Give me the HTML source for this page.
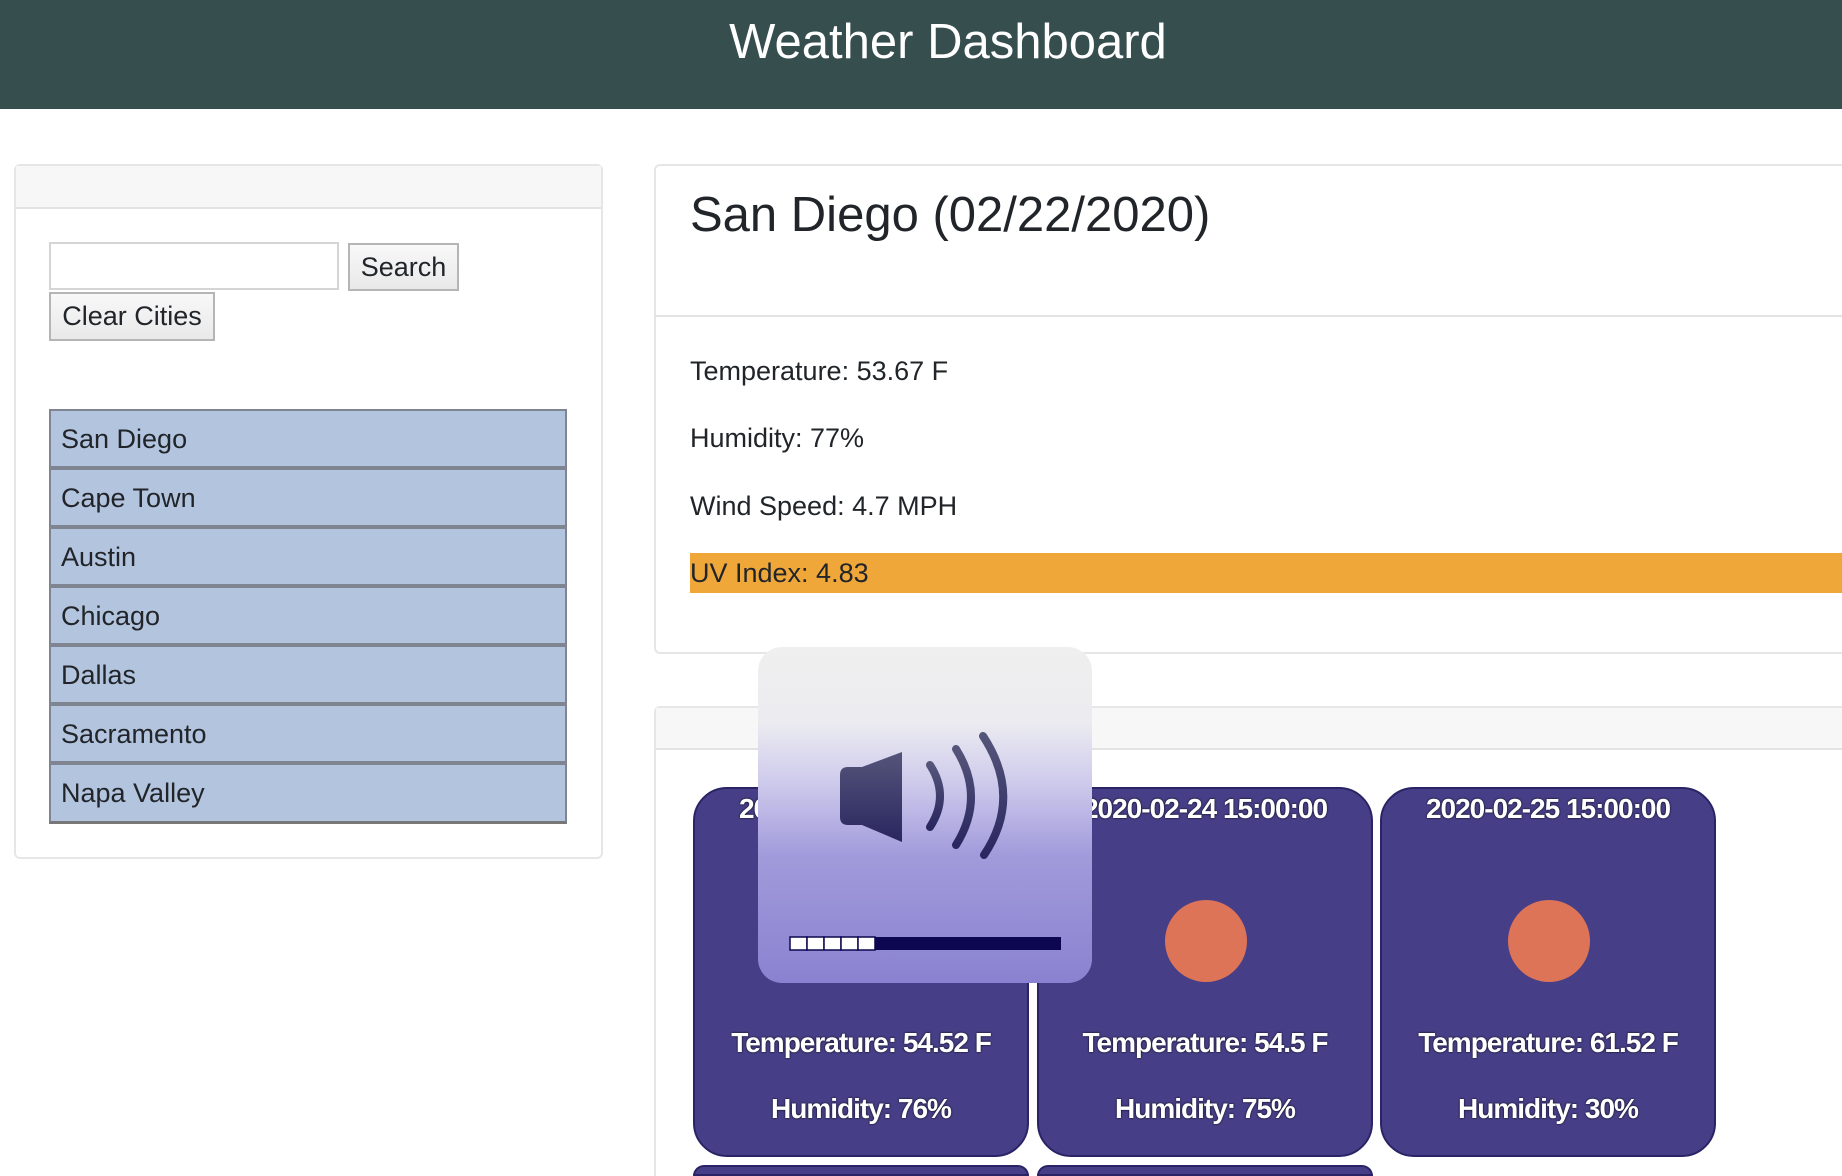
<!DOCTYPE html>
<html><head><meta charset="utf-8"><style>
*{box-sizing:border-box;margin:0;padding:0}
html,body{width:1842px;height:1176px;overflow:hidden}
body{background:#fff;font-family:"Liberation Sans",sans-serif;color:#212529;position:relative}
.a{position:absolute}
.hdr{left:0;top:0;width:1842px;height:109px;background:#364e4e;color:#fff;font-size:49px;text-align:center;line-height:84px;padding-left:54px}
.panel{border:2px solid #e6e6e6;border-radius:6px;background:#fff}
.ph{background:#f7f7f7;border-bottom:2px solid #e3e3e3}
.btn{background:linear-gradient(#f8f8f8,#e9e9e9);border:2px solid #b5b5b5;font-size:27px;text-align:center}
.li{left:49px;width:518px;height:59px;background:#b3c4df;border:2px solid #7f8590;font-size:27px;line-height:56px;padding-left:10px}
.t{font-size:27px;left:690px}
.card{width:336px;height:370px;background:#463f87;border-radius:34px;border:2px solid #2a2466;color:#fff;text-align:center;font-size:28px;text-shadow:0 0 2px #000;letter-spacing:-1px;font-weight:bold}
.card .d{position:absolute;top:4px;width:100%}
.card .c{position:absolute;left:126px;top:111px;width:82px;height:82px;border-radius:50%;background:#de7457}
.card .tp{position:absolute;top:238px;width:100%}
.card .hm{position:absolute;top:304px;width:100%}
</style></head><body>
<div class="a hdr">Weather Dashboard</div>

<div class="a panel" style="left:14px;top:164px;width:589px;height:695px"><div class="ph" style="height:43px"></div></div>
<div class="a" style="left:49px;top:242px;width:290px;height:48px;border:2px solid #d5d5d5"></div>
<div class="a btn" style="left:348px;top:243px;width:111px;height:48px;line-height:44px">Search</div>
<div class="a btn" style="left:49px;top:292px;width:166px;height:49px;line-height:45px">Clear Cities</div>
<div class="a li" style="top:409px">San Diego</div>
<div class="a li" style="top:468px">Cape Town</div>
<div class="a li" style="top:527px">Austin</div>
<div class="a li" style="top:586px">Chicago</div>
<div class="a li" style="top:645px">Dallas</div>
<div class="a li" style="top:704px">Sacramento</div>
<div class="a li" style="top:763px;height:61px;border-bottom:3px solid #777">Napa Valley</div>

<div class="a panel" style="left:654px;top:164px;width:1200px;height:490px;border-right:none"></div>
<div class="a" style="left:654px;top:315px;width:1188px;height:2px;background:#e3e3e3"></div>
<div class="a" style="left:690px;top:187px;font-size:49px">San Diego (02/22/2020)</div>
<div class="a t" style="top:356px">Temperature: 53.67 F</div>
<div class="a t" style="top:423px">Humidity: 77%</div>
<div class="a t" style="top:491px">Wind Speed: 4.7 MPH</div>
<div class="a" style="left:690px;top:553px;width:1152px;height:40px;background:#f0a73a"></div>
<div class="a t" style="top:558px">UV Index: 4.83</div>

<div class="a panel" style="left:654px;top:706px;width:1200px;height:520px;border-right:none"><div class="ph" style="height:42px"></div></div>

<div class="a card" style="left:693px;top:787px"><div class="d">2020-02-23 15:00:00</div><div class="c"></div><div class="tp">Temperature: 54.52 F</div><div class="hm">Humidity: 76%</div></div>
<div class="a card" style="left:1037px;top:787px"><div class="d">2020-02-24 15:00:00</div><div class="c"></div><div class="tp">Temperature: 54.5 F</div><div class="hm">Humidity: 75%</div></div>
<div class="a card" style="left:1380px;top:787px"><div class="d">2020-02-25 15:00:00</div><div class="c"></div><div class="tp">Temperature: 61.52 F</div><div class="hm">Humidity: 30%</div></div>
<div class="a card" style="left:693px;top:1165px;height:11px;border-radius:20px 20px 0 0"></div>
<div class="a card" style="left:1037px;top:1165px;height:11px;border-radius:20px 20px 0 0"></div>

<div class="a" style="left:758px;top:647px;width:334px;height:336px;border-radius:24px;background:linear-gradient(#efefef 0%,#ececf0 22%,#cfcbec 40%,#a19bdb 62%,#8a82d0 100%)">
<svg width="334" height="336" viewBox="0 0 334 336">
<defs><linearGradient id="g" x1="0" y1="0" x2="0" y2="1"><stop offset="0" stop-color="#55557a"/><stop offset="1" stop-color="#2a2660"/></linearGradient></defs>
<path d="M82 128 Q82 120 90 120 L104 120 L144 105 L144 195 L104 178 L90 178 Q82 178 82 170 Z" fill="url(#g)"/>
<path d="M172 118 Q192 149 172 180" stroke="url(#g)" stroke-width="8" fill="none" stroke-linecap="round"/>
<path d="M198 102 Q228 150 198 198" stroke="url(#g)" stroke-width="8" fill="none" stroke-linecap="round"/>
<path d="M225 89 Q265 150 226 208" stroke="url(#g)" stroke-width="8" fill="none" stroke-linecap="round"/>
<rect x="32" y="290" width="271" height="13" fill="#0c0750"/>
<g fill="#fff" stroke="#0c0750" stroke-width="1.5"><rect x="32" y="290" width="17" height="13"/><rect x="49" y="290" width="17" height="13"/><rect x="66" y="290" width="17" height="13"/><rect x="83" y="290" width="17" height="13"/><rect x="100" y="290" width="17" height="13"/></g>
</svg></div>
</body></html>
